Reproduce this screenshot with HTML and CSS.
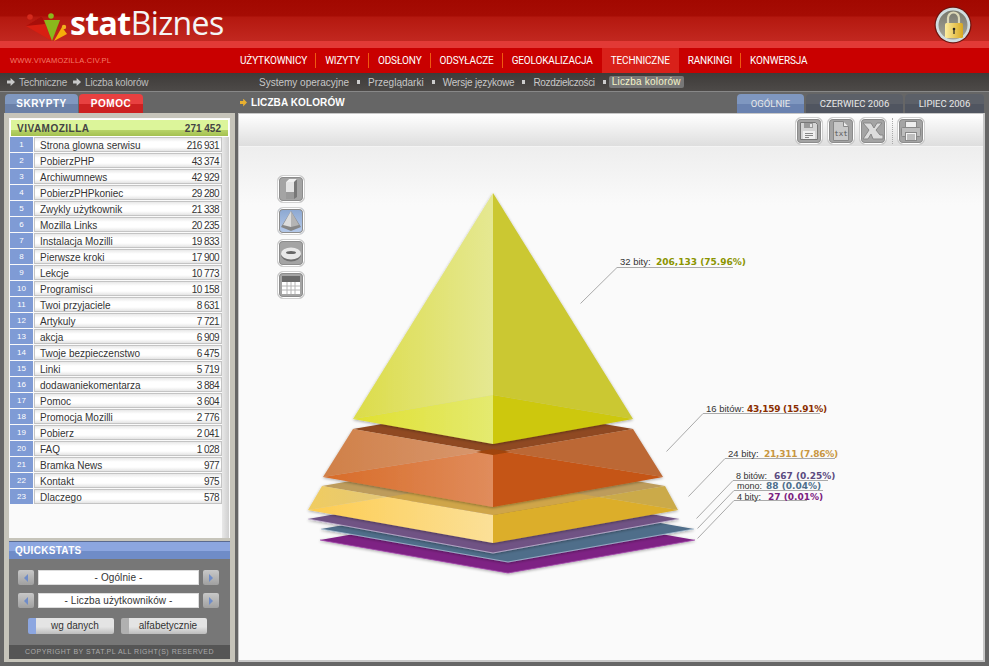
FILE: index.html
```html
<!DOCTYPE html>
<html lang="pl">
<head>
<meta charset="utf-8">
<title>statBiznes</title>
<link rel="stylesheet" href="styles.css">
</head>
<body>
<div class="page">
  <header class="top">
    <svg class="logo-mark" width="50" height="34" viewBox="20 10 50 34">
      <polygon points="26,26 42,16 52,41" fill="#d81f12"/>
      <polygon points="26,26 42,16 45,24" fill="#a80f0a"/>
      <circle cx="30" cy="17" r="2.8" fill="#d42a1c"/>
      <polygon points="44,20 60,20 52,41" fill="#8ab81c"/>
      <circle cx="51" cy="16" r="2.8" fill="#8ab81c"/>
      <polygon points="54,41 62,27 67,34" fill="#f5ae0a"/>
      <circle cx="64" cy="27" r="2.2" fill="#f0b020"/>
    </svg>
    <div class="brand"><b>stat</b>Biznes</div>
    <svg class="lock" width="38" height="38" viewBox="0 0 38 38">
      <defs>
        <linearGradient id="lockbg" x1="0" y1="0" x2="0" y2="1"><stop offset="0" stop-color="#77776c"/><stop offset="1" stop-color="#a8a89c"/></linearGradient>
        <linearGradient id="lockgold"><stop offset="0" stop-color="#fdeea0"/><stop offset="1" stop-color="#d8a820"/></linearGradient>
      </defs>
      <circle cx="19" cy="19" r="18.500" fill="#6e140e"/>
      <circle cx="19" cy="19" r="17.300" fill="#d0dde0"/>
      <circle cx="19" cy="19" r="14.500" fill="url(#lockbg)"/>
      <path d="M14 17v-5a5.500 5.500 0 0 1 11 0v5" fill="none" stroke="#dcd8b8" stroke-width="2.200"/>
      <rect x="11" y="17" width="18" height="15" rx="1.500" fill="url(#lockgold)"/>
      <circle cx="20" cy="23" r="1.300" fill="#222"/>
      <rect x="19.400" y="23" width="1.200" height="5" fill="#222"/>
    </svg>
  </header>

  <nav class="mainnav">
    <span class="url">WWW.VIVAMOZILLA.CIV.PL</span>
    <ul class="menu">
      <li>UŻYTKOWNICY</li>
      <li>WIZYTY</li>
      <li>ODSŁONY</li>
      <li>ODSYŁACZE</li>
      <li>GEOLOKALIZACJA</li>
      <li class="on">TECHNICZNE</li>
      <li>RANKINGI</li>
      <li>KONWERSJA</li>
    </ul>
  </nav>

  <div class="crumbs">
    <div class="trail">
      <span class="arrow"></span><span>Techniczne</span>
      <span class="arrow"></span><span>Liczba kolorów</span>
    </div>
    <ul class="subnav">
      <li>Systemy operacyjne</li>
      <li class="dot"></li>
      <li>Przeglądarki</li>
      <li class="dot"></li>
      <li class="tight">Wersje językowe</li>
      <li class="dot"></li>
      <li class="tighter">Rozdzielczości</li>
      <li class="dot"></li>
      <li class="cur">Liczba kolorów</li>
    </ul>
  </div>

  <main class="main">
    <aside class="side">
      <div class="sidetabs">
        <div class="stab blue">SKRYPTY</div>
        <div class="stab red">POMOC</div>
      </div>
      <div class="sidepanel">
        <div class="listarea">
          <div class="listtitle"><span>VIVAMOZILLA</span><span>271 452</span></div>
          <div class="listwrap">
            <ol class="rows">
              <li><i>1</i><p><span>Strona glowna serwisu</span><span>216 931</span></p></li>
              <li><i>2</i><p><span>PobierzPHP</span><span>43 374</span></p></li>
              <li><i>3</i><p><span>Archiwumnews</span><span>42 929</span></p></li>
              <li><i>4</i><p><span>PobierzPHPkoniec</span><span>29 280</span></p></li>
              <li><i>5</i><p><span>Zwykly użytkownik</span><span>21 338</span></p></li>
              <li><i>6</i><p><span>Mozilla Links</span><span>20 235</span></p></li>
              <li><i>7</i><p><span>Instalacja Mozilli</span><span>19 833</span></p></li>
              <li><i>8</i><p><span>Pierwsze kroki</span><span>17 900</span></p></li>
              <li><i>9</i><p><span>Lekcje</span><span>10 773</span></p></li>
              <li><i>10</i><p><span>Programisci</span><span>10 158</span></p></li>
              <li><i>11</i><p><span>Twoi przyjaciele</span><span>8 631</span></p></li>
              <li><i>12</i><p><span>Artykuly</span><span>7 721</span></p></li>
              <li><i>13</i><p><span>akcja</span><span>6 909</span></p></li>
              <li><i>14</i><p><span>Twoje bezpieczenstwo</span><span>6 475</span></p></li>
              <li><i>15</i><p><span>Linki</span><span>5 719</span></p></li>
              <li><i>16</i><p><span>dodawaniekomentarza</span><span>3 884</span></p></li>
              <li><i>17</i><p><span>Pomoc</span><span>3 604</span></p></li>
              <li><i>18</i><p><span>Promocja Mozilli</span><span>2 776</span></p></li>
              <li><i>19</i><p><span>Pobierz</span><span>2 041</span></p></li>
              <li><i>20</i><p><span>FAQ</span><span>1 028</span></p></li>
              <li><i>21</i><p><span>Bramka News</span><span>977</span></p></li>
              <li><i>22</i><p><span>Kontakt</span><span>975</span></p></li>
              <li><i>23</i><p><span>Dlaczego</span><span>578</span></p></li>
            </ol>
            <div class="scroll"></div>
          </div>
        </div>
        <section class="quick">
          <h2 class="quickhead">QUICKSTATS</h2>
          <div class="quickbody">
            <div class="pick">
              <span class="step"><span class="tri left"></span></span>
              <span class="field">- Ogólnie -</span>
              <span class="step"><span class="tri right"></span></span>
            </div>
            <div class="pick">
              <span class="step"><span class="tri left"></span></span>
              <span class="field">- Liczba użytkowników -</span>
              <span class="step"><span class="tri right"></span></span>
            </div>
            <div class="sorts">
              <span class="sort active">wg danych</span>
              <span class="sort">alfabetycznie</span>
            </div>
          </div>
          <footer class="copy">COPYRIGHT BY STAT.PL ALL RIGHT(S) RESERVED</footer>
        </section>
      </div>
    </aside>

    <section class="content">
      <div class="contenthead">
        <h1 class="ctitle"><span class="gold"></span>LICZBA KOLORÓW</h1>
        <div class="ctabs">
          <div class="ctab on">OGÓLNIE</div>
          <div class="ctab wide">CZERWIEC 2006</div>
          <div class="ctab">LIPIEC 2006</div>
        </div>
      </div>
      <div class="chartpanel">
        <div class="toolbar">
          <span class="ibtn">
            <svg width="20" height="20" viewBox="0 0 20 20"><path d="M1.500 1.500h15l2 2v15h-17z" fill="#d4d4d4" stroke="#777"/><rect x="5" y="2" width="9" height="5" fill="#9a9a9a"/><rect x="11" y="3" width="2" height="3" fill="#e4e4e4"/><rect x="4" y="10" width="12" height="8" fill="#f0f0f0"/><path d="M6 12.500h8M6 14.500h8M6 16.500h4" stroke="#888"/></svg>
          </span>
          <span class="ibtn">
            <svg width="20" height="20" viewBox="0 0 20 20"><path d="M2.500 .5h10l5 5v14h-15z" fill="#c8c8c8" stroke="#888"/><path d="M12.500 .5v5h5" fill="#ececec" stroke="#888"/><text class="txtglyph" x="10" y="15" text-anchor="middle">txt</text></svg>
          </span>
          <span class="ibtn">
            <svg width="22" height="20" viewBox="0 0 22 20"><polygon points="1,2 9,2 12,7 15,2 20,2 14,9 18,14 21,14 21,18 11,18 9,13 6,18 1,18 7,9" fill="#dcdcdc" stroke="#888"/></svg>
          </span>
          <span class="tooldiv"></span>
          <span class="ibtn">
            <svg width="22" height="22" viewBox="0 0 22 22"><rect x="5.500" y="1.500" width="11" height="7" fill="#eee" stroke="#888"/><rect x="1.500" y="7.500" width="19" height="9" rx="1" fill="#bcbcbc" stroke="#888"/><rect x="5.500" y="12.500" width="11" height="8" fill="#f4f4f4" stroke="#888"/><path d="M7 15h8M7 17h8M7 19h8" stroke="#888"/></svg>
          </span>
        </div>
        <div class="stage">
          <div class="shapes">
            <span class="ibtn">
              <svg width="20" height="22" viewBox="0 0 20 22"><polygon points="5,4 8,1 16,1 16,19 13,21 5,21" fill="#777"/><polygon points="5,4 8,1 16,1 13,4" fill="#f0f0f0"/><polygon points="5,4 13,4 13,14 5,14" fill="#e4e4e4"/><polygon points="5,14 13,14 13,21 5,21" fill="#9a9a9a"/></svg>
            </span>
            <span class="ibtn sel">
              <svg width="22" height="22" viewBox="0 0 22 22"><polygon points="11,1 1,17 11,21 21,17" fill="#868686"/><polygon points="11,1 3,15 11,17" fill="#dcdcdc"/><polygon points="11,1 19,15 11,17" fill="#b4b4b4"/></svg>
            </span>
            <span class="ibtn">
              <svg width="22" height="22" viewBox="0 0 22 22"><ellipse cx="11" cy="13" rx="10" ry="6.500" fill="#707070"/><ellipse cx="11" cy="11.500" rx="10" ry="6" fill="#e8e8e8"/><ellipse cx="11" cy="10.500" rx="5" ry="1.600" fill="#666"/></svg>
            </span>
            <span class="ibtn">
              <svg width="22" height="22" viewBox="0 0 22 22"><rect x="2" y="2" width="18" height="18" fill="#fff"/><rect x="2" y="2" width="18" height="6" fill="#6a6a6a"/><path d="M2 12h18M2 16h18M7 8v12M11 8v12M15 8v12" stroke="#b4b4b4"/></svg>
            </span>
          </div>
          <svg class="chart" viewBox="239 147 746 515" width="746" height="515">
            <defs>
              <filter id="soft" x="-10%" y="-10%" width="120%" height="120%"><feGaussianBlur in="SourceAlpha" stdDeviation="1.400"/><feOffset dy="0.500"/><feComponentTransfer><feFuncA type="linear" slope="0.35"/></feComponentTransfer><feMerge><feMergeNode/><feMergeNode in="SourceGraphic"/></feMerge></filter>
              <linearGradient id="yL"><stop offset="0" stop-color="#dcdc48"/><stop offset="1" stop-color="#e5e892"/></linearGradient>
              <linearGradient id="yLb"><stop offset="0" stop-color="#e0e030"/><stop offset="1" stop-color="#e4ea70"/></linearGradient>
              <linearGradient id="oL"><stop offset="0" stop-color="#d08048"/><stop offset="1" stop-color="#d89870"/></linearGradient>
              <linearGradient id="oLb"><stop offset="0" stop-color="#d86c28"/><stop offset="1" stop-color="#e08c5c"/></linearGradient>
              <linearGradient id="aL"><stop offset="0" stop-color="#f0cc60"/><stop offset="1" stop-color="#e4c878"/></linearGradient>
              <linearGradient id="aLb"><stop offset="0" stop-color="#fdcc50"/><stop offset="1" stop-color="#fbe098"/></linearGradient>
            </defs>
            <g filter="url(#soft)">
              <polygon points="320,540 508,507 695,540 508,573" fill="#7e2484"/>
              <path d="M320,540 508,573 695,540" fill="none" stroke="#a040a8" stroke-width=".8"/>
            </g>
            <g filter="url(#soft)">
              <polygon points="321,529 508,496 694,529 508,562" fill="#4f6e8a"/>
              <path d="M321,529 508,562 694,529" fill="none" stroke="#a8c0d4" stroke-width=".8"/>
            </g>
            <g filter="url(#soft)">
              <polygon points="308,519 493,486 679,519 493,553" fill="#6f5384"/>
              <path d="M308,519 493,553 679,519" fill="none" stroke="#c8b8d4" stroke-width=".8"/>
            </g>
            <g filter="url(#soft)">
              <polygon points="322,486 493,456 665,486 493,515" fill="#bd9c5c"/>
              <polygon points="322,486 308,510 387,497" fill="url(#aL)"/>
              <polygon points="665,486 678,510 599,497" fill="#cbaa4a"/>
              <polygon points="387,497 493,480 599,497 493,515" fill="#cfa548"/>
              <polygon points="308,510 387,497 493,515 493,543" fill="url(#aLb)"/>
              <polygon points="678,510 599,497 493,515 493,543" fill="#dcae2a"/>
            </g>
            <g filter="url(#soft)">
              <polygon points="353,429 493,405 633,429 493,453" fill="#8f4a22"/>
              <polygon points="353,429 323,477 493,450 493,453" fill="url(#oL)"/>
              <polygon points="633,429 663,477 493,450 493,453" fill="#bc6835"/>
              <polygon points="323,477 493,450 493,507" fill="url(#oLb)"/>
              <polygon points="663,477 493,450 493,507" fill="#c55513"/>
              <polygon points="476,452 493,449 510,452 493,455" fill="#a04408"/>
            </g>
            <g filter="url(#soft)">
              <polygon points="493,193 353,419 493,395" fill="url(#yL)"/>
              <polygon points="493,193 633,419 493,395" fill="#cbc832"/>
              <polygon points="353,419 493,395 493,444" fill="url(#yLb)"/>
              <polygon points="633,419 493,395 493,444" fill="#cdc80f"/>
            </g>
            <g class="leads">
              <path d="M580.500 303.500 617 267.500H733"/>
              <path d="M666.500 451.500 703 413.500H820"/>
              <path d="M688.500 496.500 725 458.500H835"/>
              <path d="M696.500 518.500 733 480.500H828"/>
              <path d="M697.500 528.500 734 490.500H823"/>
              <path d="M697.500 538.500 734 500.500H807"/>
            </g>
            <text class="lab" x="620" y="265">32 bity:</text>
            <text class="v c1" x="656" y="265">206,133 (75.96%)</text>
            <text class="lab" x="706" y="412">16 bitów:</text>
            <text class="v tightv c2" x="747" y="412">43,159 (15.91%)</text>
            <text class="lab" x="728" y="457">24 bity:</text>
            <text class="v tightv c3" x="764" y="457">21,311 (7.86%)</text>
            <text class="lab small" x="736" y="478.500">8 bitów:</text>
            <text class="v c4" x="774" y="478.500">667 (0.25%)</text>
            <text class="lab small" x="737" y="489">mono:</text>
            <text class="v c5" x="766" y="489">88 (0.04%)</text>
            <text class="lab small" x="737" y="499.500">4 bity:</text>
            <text class="v c6" x="768" y="499.500">27 (0.01%)</text>
          </svg>
        </div>
      </div>
    </section>
  </main>
</div>
</body>
</html>
```

FILE: styles.css
```css
* { box-sizing: border-box; }
html, body { margin: 0; padding: 0; }
body { background: #666; font-family: "Liberation Sans", Arial, sans-serif; font-size: 11px; color: #222; }
ul, ol { list-style: none; margin: 0; padding: 0; }
p, h1, h2 { margin: 0; }
.page { width: 989px; height: 666px; overflow: hidden; display: flex; flex-direction: column; }

.top { height: 48px; position: relative; display: flex; align-items: center; padding-left: 70px;
  background: linear-gradient(#a20800 0, #a60c04 16px, #b4180f 17px, #c22820 41px, #e23a36 41px, #e23a36 48px); }
.logo-mark { position: absolute; left: 20px; top: 10px; }
.brand { font-family: "Open Sans", sans-serif; font-size: 32px; line-height: 48px; color: #f4f4f4; margin-top: -2px; letter-spacing: -.6px; }
.brand b { font-weight: 700; color: #fff; }
.lock { position: absolute; right: 17px; top: 6px; }

.mainnav { height: 25px; background: #c90000; display: flex; align-items: center; color: #fff; }
.url { width: 231px; padding-left: 10px; font-size: 7.500px; letter-spacing: .2px; color: #f47a68; }
.menu { display: flex; height: 25px; align-items: center; font-family: Roboto, "Liberation Sans", sans-serif; font-size: 10px; letter-spacing: -.15px; }
.menu li { position: relative; padding: 0 9px; line-height: 25px; height: 25px; }
.menu li + li::before { content: ""; position: absolute; left: -1px; top: 5px; height: 15px; width: 1px; background: #f05a10; }
.menu li.on { background: #d9211a; }
.menu li.on::before, .menu li.on + li::before { display: none; }

.crumbs { height: 18px; background: linear-gradient(#3e3b39, #4d4a48); display: flex; align-items: center; color: #c8c8c8; font-size: 10px; }
.trail { width: 259px; display: flex; align-items: center; padding-left: 7px; gap: 4px; color: #bdbdbd; letter-spacing: -.2px; }
.arrow { width: 8px; height: 8px; background: #c8c8c8; clip-path: polygon(0 30%, 45% 30%, 45% 0, 100% 50%, 45% 100%, 45% 70%, 0 70%); }
.trail span:nth-child(2) { margin-right: 2px; }
.subnav { display: flex; align-items: center; gap: 7px; }
.subnav .dot { width: 3px; height: 4px; background: #ccc; margin: 0 1px; }
.subnav .tight { letter-spacing: -.2px; }
.subnav .tighter { letter-spacing: -.35px; }
.subnav .cur { background: #777; color: #f4f4c8; border-radius: 2px; padding: 0 3px; line-height: 12px; margin-left: -5px; letter-spacing: .2px; }

.main { flex: 1; display: flex; min-height: 0; background: #666; border-top: 1px solid #888; padding-left: 4px; }
.side { width: 231px; display: flex; flex-direction: column; }
.sidetabs { display: flex; height: 21px; padding: 2px 0 0 1px; gap: 1px; }
.stab { border-radius: 4px 4px 0 0; font-size: 10px; font-weight: 700; color: #fff; text-align: center; line-height: 19px; letter-spacing: .5px; }
.stab.blue { width: 73px; background: linear-gradient(#8098c0 50%, #6a80a8 50%); }
.stab.red { width: 64px; background: linear-gradient(#e84040 50%, #cc2020 50%); }
.sidepanel { width: 231px; height: 549px; border: 5px solid #c6c4ba; border-bottom-width: 3px; background: #fafafa; display: flex; flex-direction: column; }
.listarea { flex: 1; min-height: 0; padding: 1px 1px 0; display: flex; flex-direction: column; }
.listtitle { height: 18px; flex: none; display: flex; justify-content: space-between; align-items: center; padding: 0 7px 0 6px; font-weight: 700; font-size: 10px; letter-spacing: .5px; color: #444; background: linear-gradient(#dcf59a 62%, #b8d468 62%, #a4c050); border: 1px solid #fff; }
.listtitle span + span { letter-spacing: 0; }
.listwrap { display: flex; flex: 1; min-height: 0; }
.rows { width: 212px; }
.rows li { display: flex; height: 16px; padding-bottom: 1px; }
.rows i { width: 23px; margin-right: 1px; background: #7f9bd5; color: #fff; font-style: normal; font-size: 8px; text-align: center; line-height: 15px; }
.rows p { flex: 1; display: flex; justify-content: space-between; padding: 1px 2px 0 5px; line-height: 13px; font-size: 10px; color: #333; border: 1px solid #c4c4c4; background: linear-gradient(#e8e8e8, #fff 30%, #fff 70%, #e4e4e4); }
.rows p span + span { letter-spacing: -.55px; }
.scroll { width: 7px; background: linear-gradient(90deg, #e8e8e8, #cfcfcf); }

.quick { height: 121px; flex: none; border-top: 3px solid #c6c4ba; display: flex; flex-direction: column; background: #777; }
.quickhead { height: 18px; border-top: 1px solid #5a6a90; font-size: 10px; font-weight: 700; line-height: 17px; padding-left: 6px; letter-spacing: .3px; color: #fff; background: linear-gradient(#8ca6e0 55%, #6f8cc8 55%); }
.quickbody { flex: 1; display: flex; flex-direction: column; padding: 11px 11px 0 9px; gap: 8px; }
.pick { display: flex; justify-content: space-between; height: 15px; }
.step { width: 16px; height: 15px; background: linear-gradient(#c8c8c8, #a0a0a0); border-radius: 2px; display: flex; align-items: center; justify-content: center; }
.tri { width: 0; height: 0; border: 4px solid transparent; }
.tri.left { border-right-color: #6f8cc8; margin-right: 4px; }
.tri.right { border-left-color: #6f8cc8; margin-left: 4px; }
.field { width: 161px; height: 15px; background: #fff; border: 1px solid #ddd; text-align: center; font-size: 10px; letter-spacing: .1px; line-height: 13px; color: #333; }
.sorts { display: flex; gap: 7px; padding: 2px 0 0 10px; }
.sort { width: 86px; height: 16px; border-radius: 2px; border-left: 8px solid #b0b0b0; background: linear-gradient(#e4e4e4 55%, #bcbcbc); font-size: 10px; line-height: 15px; text-align: center; color: #333; }
.sort.active { border-left-color: #8ca6e0; }
.copy { height: 14px; background: #555; color: #aaa; font-size: 7px; letter-spacing: .5px; line-height: 14px; text-align: center; }

.content { width: 747px; margin-left: 3px; display: flex; flex-direction: column; }
.contenthead { height: 21px; display: flex; justify-content: space-between; align-items: flex-end; padding-right: 1px; }
.ctitle { font-size: 10px; font-weight: 700; color: #fff; letter-spacing: .1px; display: flex; align-items: center; gap: 4px; height: 21px; padding-left: 2px; }
.gold { width: 7px; height: 8px; background: #e8b030; clip-path: polygon(0 30%, 45% 30%, 45% 0, 100% 50%, 45% 100%, 45% 70%, 0 70%); }
.ctabs { display: flex; gap: 2px; height: 19px; }
.ctab { width: 79px; border-radius: 4px 4px 0 0; color: #e8e8e8; font-family: Roboto, "Liberation Sans", sans-serif; font-size: 9.500px; line-height: 19px; text-align: center; background: linear-gradient(#5c6068 50%, #505560 50%); }
.ctab.on { width: 67px; background: linear-gradient(#7f97c0 50%, #6a82b0 50%); }
.ctab.wide { width: 97px; }
.chartpanel { width: 747px; height: 549px; background: #fafafa; border: 2px solid #c8c8c8; border-top-width: 1px; border-left-width: 1px; display: flex; flex-direction: column; }
.toolbar { height: 33px; flex: none; display: flex; align-items: center; gap: 4px; padding: 2px 0 0 556px; background: linear-gradient(#fff, #dedede); border-bottom: 1px solid #f4f4f4; }
.tooldiv { width: 1px; height: 26px; border-left: 1px dotted #aaa; margin: 0 0 0 1px; }
.ibtn { width: 28px; height: 28px; border: 1px solid #d0d0d0; border-radius: 6px; background: #a4a4a4; box-shadow: inset 0 0 0 1px #fff, inset 0 0 0 2px #8c8c8c; display: inline-flex; align-items: center; justify-content: center; flex: none; }
.ibtn.sel { background: linear-gradient(#8aa6d0, #b8cbea); }
.txtglyph { font-family: "DejaVu Sans Mono", monospace; font-size: 7.500px; fill: #555; }
.stage { position: relative; flex: 1; background: linear-gradient(#eee, #fafafa 58px); }
.shapes { position: absolute; left: 38px; top: 28px; display: flex; flex-direction: column; gap: 4px; z-index: 1; }
.chart { display: block; position: absolute; left: 0; top: 0; }
.leads path { fill: none; stroke: #aaa; stroke-width: 1; }
.lab { font-family: "Liberation Sans", sans-serif; font-size: 9.500px; fill: #333; }
.lab.small { font-size: 9px; }
.v { font-family: "DejaVu Sans", sans-serif; font-weight: 700; font-size: 9px; }
.tightv { letter-spacing: -.25px; }
.c1 { fill: #8a9400; }
.c2 { fill: #8a2d00; }
.c3 { fill: #c89640; }
.c4 { fill: #5a4a80; }
.c5 { fill: #4d6e8c; }
.c6 { fill: #7a2080; }
```
